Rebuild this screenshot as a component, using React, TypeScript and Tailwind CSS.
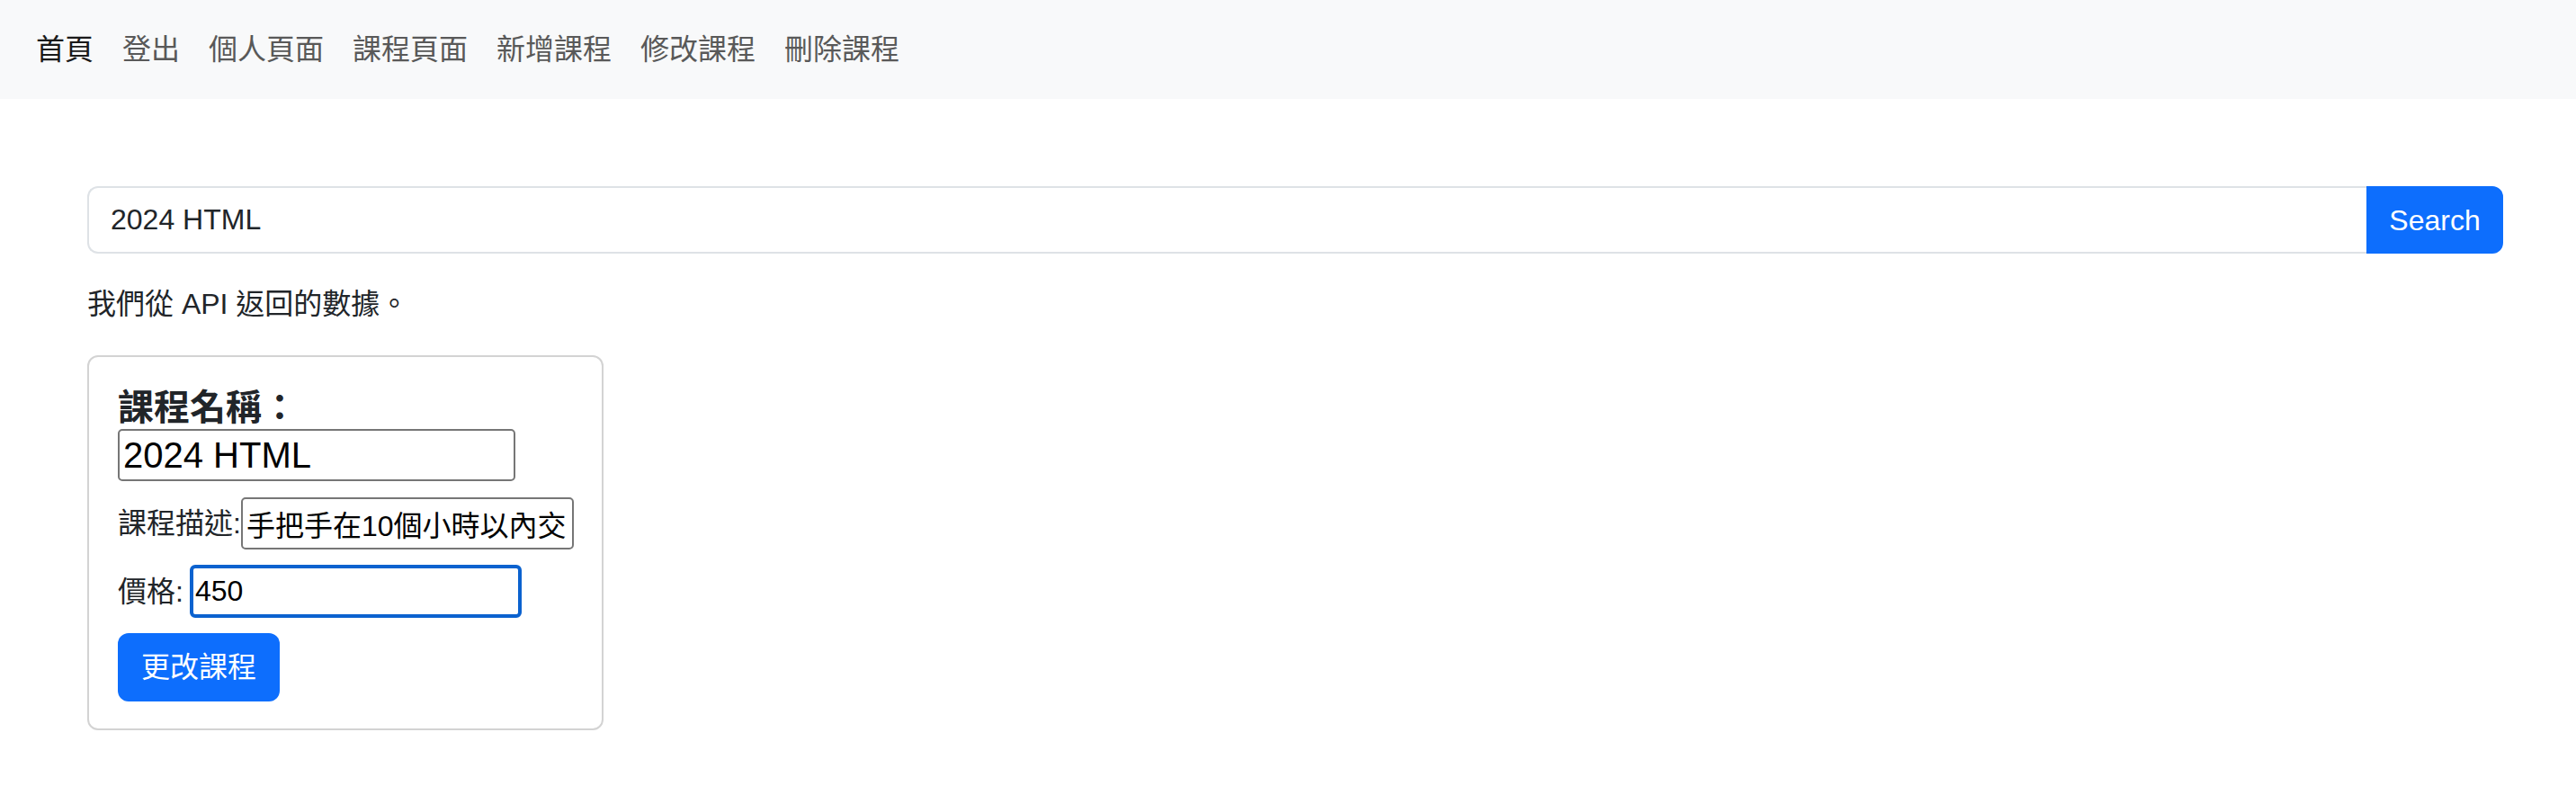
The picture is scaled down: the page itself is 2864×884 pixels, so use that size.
const font = { fontFamily: '"Liberation Sans", "Noto Sans CJK TC", sans-serif' }

const links = ['登出', '個人頁面', '課程頁面', '新增課程', '修改課程', '刪除課程']

function Navbar() {
  return (
    <nav className="flex h-[110px] items-center gap-[32px] bg-[#f8f9fa] pl-[40px] text-[32px] leading-[48px]">
      <a className="text-[#1a1a1a]">首頁</a>
      {links.map((l) => (
        <a key={l} className="text-[#595959]">{l}</a>
      ))}
    </nav>
  )
}

function CourseCard() {
  return (
    <div className="mt-[33px] w-[574px] rounded-[12px] border-2 border-[#d3d3d3] px-[32px] pt-[32px] pb-[30px] text-[#212529]">
      <div className="text-[40px] font-bold leading-[48px]">課程名稱：</div>
      <input
        defaultValue="2024 HTML"
        className="block h-[58px] w-[442px] rounded-[5px] border-2 border-[#767676] px-[4px] text-[40px] text-black outline-none"
        style={font}
      />
      <div className="mt-[18px] flex items-center whitespace-nowrap text-[32px]">
        <span className="shrink-0">課程描述:</span>
        <input
          defaultValue="手把手在10個小時以內交"
          className="h-[58px] w-[370px] shrink-0 rounded-[5px] border-2 border-[#767676] px-[4px] text-[32px] text-black outline-none"
          style={font}
        />
      </div>
      <div className="mt-[17px] flex items-center whitespace-nowrap text-[32px]">
        <span className="shrink-0">價格:</span>
        <input
          defaultValue="450"
          className="ml-[7px] h-[59px] w-[369px] shrink-0 rounded-[6px] border-[4px] border-[#0b62cf] px-[2px] text-[32px] text-black outline-none"
          style={font}
        />
      </div>
      <button className="mt-[17px] flex h-[76px] w-[180px] items-center justify-center rounded-[12px] bg-[#0d6efd] text-[32px] text-white">
        更改課程
      </button>
    </div>
  )
}

export default function App() {
  return (
    <div className="min-h-screen bg-white" style={font}>
      <Navbar />
      <main className="pl-[97px] pr-[81px] pt-[97px]">
        <div className="flex h-[75px]">
          <input
            defaultValue="2024 HTML"
            className="h-full flex-1 rounded-l-[12px] border-2 border-r-0 border-[#dee2e6] pl-[24px] text-[32px] text-[#212529] outline-none"
            style={font}
          />
          <button className="h-full w-[152px] rounded-r-[12px] bg-[#0d6efd] text-[32px] text-white">Search</button>
        </div>
        <p className="mt-[32px] text-[32px] leading-[48px] text-[#212529]">我們從 API 返回的數據。</p>
        <CourseCard />
      </main>
    </div>
  )
}
